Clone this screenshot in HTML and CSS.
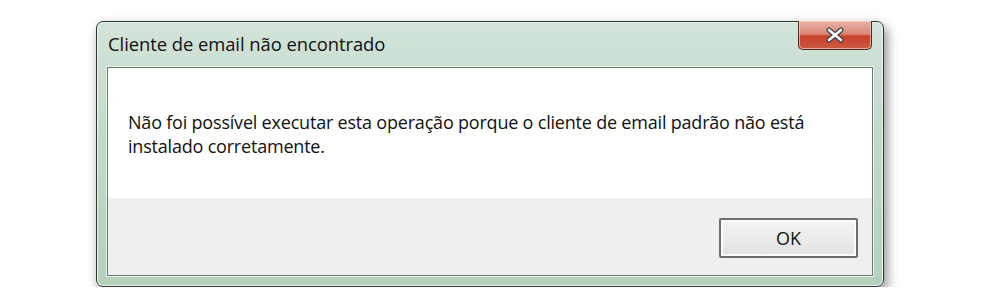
FILE: index.html
```html
<!DOCTYPE html>
<html lang="pt">
<head>
<meta charset="utf-8">
<title>Cliente de email não encontrado</title>
<link rel="stylesheet" href="styles.css">
</head>
<body>
<div class="window">
  <div class="titlebar">
    <span class="title">Cliente de email não encontrado</span>
    <button class="close" aria-label="Fechar">
      <svg width="22" height="16" viewBox="0 0 22 16">
        <path d="M5 3 L17 13 M17 3 L5 13" stroke="#3a3f4a" stroke-width="5" stroke-linecap="round"/>
        <path d="M5 3 L17 13 M17 3 L5 13" stroke="#ffffff" stroke-width="2.6" stroke-linecap="round"/>
      </svg>
    </button>
  </div>
  <div class="client">
    <div class="message">
      <p>Não foi possível executar esta operação porque o cliente de email padrão não está instalado corretamente.</p>
    </div>
    <div class="footer">
      <button class="ok">OK</button>
    </div>
  </div>
</div>
</body>
</html>
```

FILE: styles.css
```css
html, body {
  margin: 0;
  padding: 0;
  background: #ffffff;
}
body {
  padding: 21px 0 0 96px;
  font-family: "Open Sans", "Noto Sans", sans-serif;
}
.window {
  position: relative;
  width: 788px;
  height: 266px;
  box-sizing: border-box;
  border: 1px solid #2e3431;
  border-radius: 7px;
  background: linear-gradient(to bottom, #d3e3d8 0%, #c3dacb 40%, #b4d0bc 100%);
  box-shadow: 3px 5px 12px rgba(0, 0, 0, 0.45), inset 0 0 0 1px #eaf3ec;
  padding: 0 10px 10px 10px;
  display: flex;
  flex-direction: column;
}
.titlebar {
  height: 45px;
  flex: none;
  display: flex;
  align-items: center;
  padding-left: 1px;
}
.title {
  font-size: 18.4px;
  color: #101010;
  letter-spacing: -0.05px;
  margin-top: -2px;
}
.close {
  position: absolute;
  top: -1px;
  right: 11px;
  width: 74px;
  height: 29px;
  border: 1px solid #4a2a24;
  border-top: none;
  border-radius: 0 0 5px 5px;
  background: linear-gradient(to bottom, #e8b1a6 0%, #d98a79 45%, #c8412a 55%, #cc5a42 100%);
  box-shadow: inset 0 0 0 1px rgba(255, 220, 210, 0.6);
  display: flex;
  align-items: center;
  justify-content: center;
  padding: 0;
}
.client {
  flex: 1;
  border: 1px solid #6c7c72;
  background: #ffffff;
  display: flex;
  flex-direction: column;
  box-shadow: 0 0 0 1px #e8f1ea;
}
.message {
  height: 130px;
  padding: 0 20px;
  box-sizing: border-box;
}
.message p {
  margin: 0;
  padding-top: 42px;
  font-size: 18px;
  line-height: 24px;
  letter-spacing: -0.2px;
  color: #111111;
}
.footer {
  flex: 1;
  background: #efefef;
  display: flex;
  justify-content: flex-end;
  align-items: flex-start;
  padding: 20px 14px 0 0;
}
.ok {
  width: 139px;
  height: 40px;
  border: 2px solid #6d6d6d;
  border-radius: 2px;
  background: linear-gradient(to bottom, #f4f4f4 0%, #ececec 50%, #e0e0e0 100%);
  box-shadow: inset 0 0 0 2px #fbfbfb;
  font-family: "Open Sans", "Noto Sans", sans-serif;
  font-size: 18px;
  color: #111;
  padding: 0;
}
```
